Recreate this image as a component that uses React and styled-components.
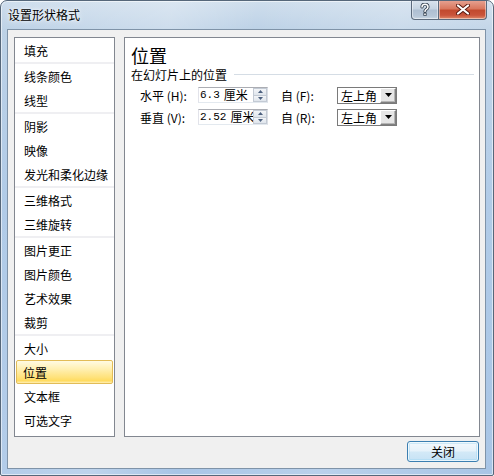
import React from "react";
import styled, { createGlobalStyle } from "styled-components";

const Global = createGlobalStyle`
  html, body { margin: 0; padding: 0; background: #ffffff; }
  body { font-family: "Noto Sans CJK SC", "Liberation Sans", sans-serif; font-size: 12px; color: #000; }
  * { box-sizing: border-box; }
`;

const Window = styled.div`
  width: 494px;
  height: 476px;
  display: flex;
  flex-direction: column;
  border: 1px solid #56677a;
  border-radius: 7px 7px 2px 2px;
  background:
    linear-gradient(100deg, rgba(255,255,255,0) 0%, rgba(255,255,255,0.25) 30%, rgba(255,255,255,0) 45%, rgba(255,255,255,0.2) 70%, rgba(255,255,255,0) 100%),
    linear-gradient(to bottom, #cfdeed 0px, #bcd1e6 30px, #acc8e6 200px, #a8c5e6 476px);
  box-shadow: inset 0 0 0 1px rgba(255,255,255,0.55);
  overflow: hidden;
`;

const TitleBar = styled.div`
  height: 28px;
  display: flex;
  align-items: flex-start;
  justify-content: space-between;
  padding: 0 6px 0 7px;
`;

const Title = styled.div`
  margin-top: 6px;
  font-size: 12px;
  line-height: 16px;
  color: #000;
  text-shadow: 0 0 6px rgba(255,255,255,0.9), 0 0 3px rgba(255,255,255,0.9);
`;

const CaptionButtons = styled.div`
  display: flex;
  margin-top: -1px;
`;

const CapButton = styled.div`
  height: 20px;
  width: ${p => p.$w}px;
  display: flex;
  align-items: center;
  justify-content: center;
  border: 1px solid #5b6a7c;
  border-top: none;
  border-radius: ${p => p.$r};
  background: ${p => p.$red
    ? "linear-gradient(to bottom, #e7a595 0%, #d9785f 45%, #c24a2e 55%, #c9543a 80%, #e08a6a 100%)"
    : "linear-gradient(to bottom, #dbe4ee 0%, #c6d4e2 45%, #aebfd2 55%, #b7c7d8 85%, #cbd8e5 100%)"};
  box-shadow: inset 0 0 0 1px rgba(255,255,255,0.45);
  & + & { border-left: none; }
`;

const Client = styled.div`
  flex: 1;
  margin: 0 7px 6px 6px;
  border: 1px solid #7f93a8;
  background: #f0f0f0;
  padding: 7px 5px 6px 6px;
  display: flex;
  flex-direction: column;
`;

const Body = styled.div`
  height: 400px;
  display: flex;
  gap: 9px;
`;

const NavList = styled.div`
  width: 101px;
  border: 1px solid #828790;
  background: #fff;
  display: flex;
  flex-direction: column;
`;

const NavItem = styled.div`
  height: 24px;
  display: flex;
  align-items: center;
  padding-left: ${p => (p.$active ? 6 : 7)}px;
  margin: 0 1px;
  font-size: 12px;
  color: #000;
  white-space: nowrap;
  border: 1px solid ${p => (p.$active ? "#e2bc57" : "transparent")};
  border-radius: 2px;
  background: ${p => p.$active
    ? "linear-gradient(to bottom, #fffbe3 0%, #fff0b4 35%, #ffe27a 75%, #ffdb5f 90%, #fff0b8 100%)"
    : "transparent"};
`;

const NavSep = styled.div`
  height: 2px;
  background: #efeff2;
`;

const Panel = styled.div`
  flex: 1;
  border: 1px solid #828790;
  background: #fff;
  padding: 6px 5px 0 6px;
  display: flex;
  flex-direction: column;
`;

const Heading = styled.div`
  height: 22px;
  font-size: 18px;
  line-height: 22px;
  color: #000;
`;

const Section = styled.div`
  height: 17px;
  display: flex;
  align-items: center;
  font-size: 12px;
  &::after {
    content: "";
    flex: 1;
    margin-left: 7px;
    border-top: 1px solid #d5dde5;
  }
`;

const Rows = styled.div`
  margin-top: 4px;
  padding-left: 9px;
  display: flex;
  flex-direction: column;
  gap: 6px;
`;

const Row = styled.div`
  height: 16px;
  display: flex;
  align-items: center;
`;

const Label = styled.div`
  width: ${p => p.$w}px;
  margin-left: ${p => p.$ml || 0}px;
  font-size: 12px;
  white-space: nowrap;
`;

const Spin = styled.div`
  width: 70px;
  height: 16px;
  display: flex;
  border: 1px solid #abadb3;
  border-color: #abadb3 #dbdfe6 #e3e9ef #e2e3ea;
  background: #fff;
`;

const SpinText = styled.div`
  flex: 1;
  overflow: hidden;
  white-space: nowrap;
  padding-left: 1px;
  display: flex;
  align-items: center;
  line-height: 14px;
`;

const Num = styled.span`
  font-family: "Liberation Mono", monospace;
  font-size: 11px;
  line-height: 14px;
  margin-right: 4px;
`;

const Unit = styled.span`
  font-size: 12px;
  line-height: 14px;
`;

const SpinButtons = styled.div`
  width: 14px;
  flex-shrink: 0;
  display: flex;
  flex-direction: column;
`;

const SpinBtn = styled.div`
  flex: 1;
  display: flex;
  align-items: center;
  justify-content: center;
  border: 1px solid #c3cad4;
  background: linear-gradient(to bottom, #f3f5f8, #dfe5ec);
  & + & { border-top: none; }
`;

const Combo = styled.div`
  width: 60px;
  height: 17px;
  display: flex;
  border: 1px solid #7a7a7a;
  background: #fff;
`;

const ComboText = styled.div`
  flex: 1;
  padding-left: 3px;
  font-size: 12px;
  line-height: 15px;
`;

const DropBtn = styled.div`
  width: 16px;
  display: flex;
  align-items: center;
  justify-content: center;
  background: #e6e6e6;
  border: 1px solid;
  border-color: #ffffff #808080 #808080 #ffffff;
  box-shadow: inset -1px -1px 0 #b5b5b5;
`;

const Footer = styled.div`
  flex: 1;
  display: flex;
  justify-content: flex-end;
  align-items: flex-end;
  padding-right: 1px;
`;

const Button = styled.div`
  width: 72px;
  height: 21px;
  display: flex;
  align-items: center;
  justify-content: center;
  font-size: 12px;
  border: 1px solid #3c7fb1;
  border-radius: 3px;
  background: linear-gradient(to bottom, #f4f9fd 0%, #e6f2fa 48%, #d3e9f7 52%, #c6e2f5 100%);
  box-shadow: inset 0 0 0 1px rgba(255,255,255,0.7), inset 0 0 0 2px rgba(160,214,243,0.45);
`;

const Tri = ({ dir = "down", color = "#000", w = 7, h = 4 }) => (
  <svg width={w} height={h} viewBox={`0 0 ${w} ${h}`}>
    {dir === "down" ? (
      <polygon points={`0,0 ${w},0 ${w / 2},${h}`} fill={color} />
    ) : (
      <polygon points={`0,${h} ${w},${h} ${w / 2},0`} fill={color} />
    )}
  </svg>
);

const groups = [
  ["填充"],
  ["线条颜色", "线型"],
  ["阴影", "映像", "发光和柔化边缘"],
  ["三维格式", "三维旋转"],
  ["图片更正", "图片颜色", "艺术效果", "裁剪"],
  ["大小", "位置", "文本框", "可选文字"],
];

const rows = [
  { label: "水平 (H):", num: "6.3", from: "自 (F):" },
  { label: "垂直 (V):", num: "2.52", from: "自 (R):" },
];

export default function App() {
  return (
    <>
      <Global />
      <Window>
        <TitleBar>
          <Title>设置形状格式</Title>
          <CaptionButtons>
            <CapButton $w={28} $r="0 0 0 4px">
              <svg width="10" height="13" viewBox="0 0 10 13">
                <path d="M2 4 Q2 1.2 5 1.2 Q8 1.2 8 4 Q8 5.6 6 6.6 Q5 7.2 5 8.6" fill="none" stroke="#33404f" strokeWidth="3.2" strokeLinecap="round" />
                <path d="M2 4 Q2 1.2 5 1.2 Q8 1.2 8 4 Q8 5.6 6 6.6 Q5 7.2 5 8.6" fill="none" stroke="#fff" strokeWidth="1.5" strokeLinecap="round" />
                <rect x="3.4" y="9.8" width="3.2" height="3" fill="#33404f" />
                <rect x="4.2" y="10.5" width="1.6" height="1.6" fill="#fff" />
              </svg>
            </CapButton>
            <CapButton $w={48} $red $r="0 0 4px 0">
              <svg width="14" height="11" viewBox="0 0 14 11">
                <path d="M2 1.5 L12 9.5 M12 1.5 L2 9.5" stroke="#5a1a10" strokeWidth="4" strokeLinecap="round" />
                <path d="M2 1.5 L12 9.5 M12 1.5 L2 9.5" stroke="#fff" strokeWidth="2.2" strokeLinecap="round" />
              </svg>
            </CapButton>
          </CaptionButtons>
        </TitleBar>
        <Client>
          <Body>
            <NavList>
              {groups.map((g, gi) => (
                <React.Fragment key={gi}>
                  {gi > 0 && <NavSep />}
                  {g.map(item => (
                    <NavItem key={item} $active={item === "位置"}>{item}</NavItem>
                  ))}
                </React.Fragment>
              ))}
            </NavList>
            <Panel>
              <Heading>位置</Heading>
              <Section>在幻灯片上的位置</Section>
              <Rows>
                {rows.map(r => (
                  <Row key={r.label}>
                    <Label $w={58}>{r.label}</Label>
                    <Spin>
                      <SpinText>
                        <Num>{r.num}</Num>
                        <Unit>厘米</Unit>
                      </SpinText>
                      <SpinButtons>
                        <SpinBtn><Tri dir="up" color="#4c607f" w={5} h={3} /></SpinBtn>
                        <SpinBtn><Tri dir="down" color="#4c607f" w={5} h={3} /></SpinBtn>
                      </SpinButtons>
                    </Spin>
                    <Label $w={56} $ml={13}>{r.from}</Label>
                    <Combo>
                      <ComboText>左上角</ComboText>
                      <DropBtn><Tri dir="down" color="#000" w={7} h={4} /></DropBtn>
                    </Combo>
                  </Row>
                ))}
              </Rows>
            </Panel>
          </Body>
          <Footer>
            <Button>关闭</Button>
          </Footer>
        </Client>
      </Window>
    </>
  );
}
